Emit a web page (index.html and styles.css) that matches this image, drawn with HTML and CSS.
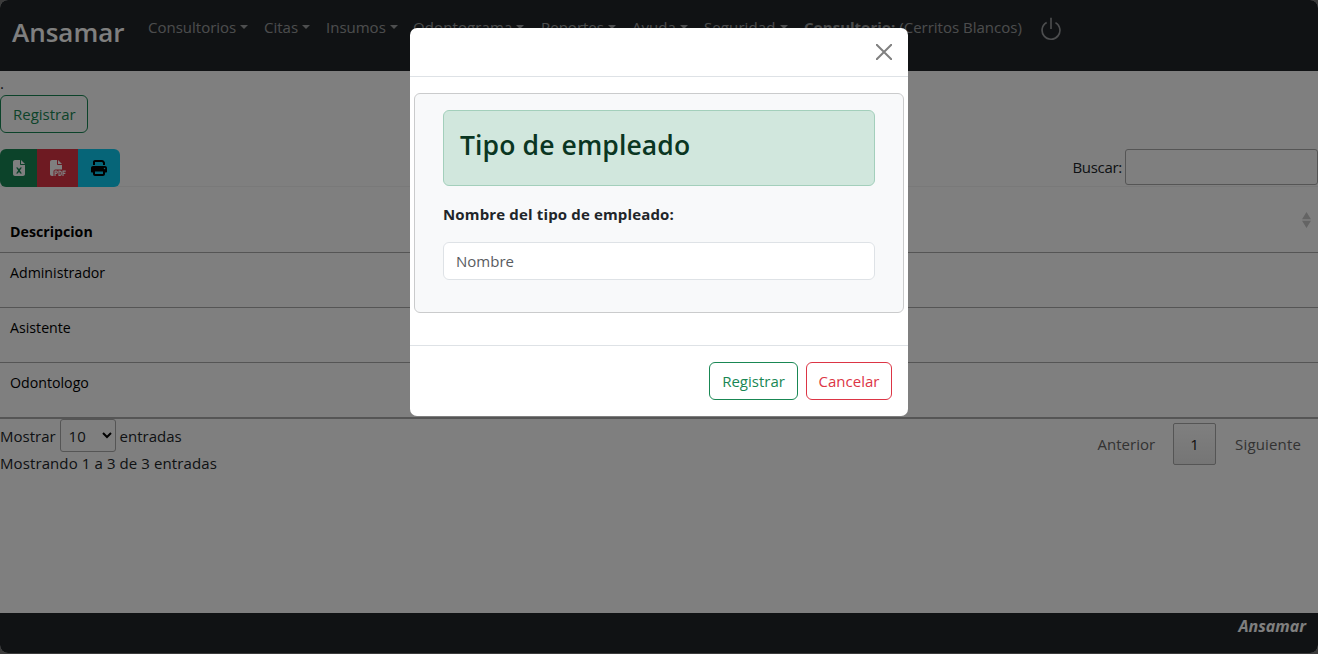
FILE: index.html
```html
<!DOCTYPE html>
<html lang="es">
<head>
<meta charset="utf-8">
<title>Ansamar</title>
<link rel="stylesheet" href="styles.css">
</head>
<body>
<div class="app">
  <nav class="navbar">
    <a class="brand">Ansamar</a>
    <ul class="menu">
      <li class="caret w-consultorios">Consultorios</li>
      <li class="caret w-citas">Citas</li>
      <li class="caret w-insumos">Insumos</li>
      <li class="caret w-odontograma">Odontograma</li>
      <li class="caret w-reportes">Reportes</li>
      <li class="caret w-ayuda">Ayuda</li>
      <li class="caret w-seguridad">Seguridad</li>
      <li class="w-clinic"><b>Consultorio:</b> (Cerritos Blancos)</li>
      <li class="power"><svg width="26" height="26" viewBox="0 0 16 16" fill="currentColor"><path d="M7.5 1v7h1V1z"/><path d="M3 8.812a5 5 0 0 1 2.578-4.375l-.485-.874A6 6 0 1 0 11 3.616l-.501.865A5 5 0 1 1 3 8.812"/></svg></li>
    </ul>
  </nav>
  <main class="content">
    <div class="dot">.</div>
    <button class="btn btn-success">Registrar</button>
    <div class="toolbar">
      <div class="exports">
        <button class="export excel"><svg width="12" height="16" viewBox="0 0 384 512" fill="currentColor"><path d="M64 0C29 0 0 29 0 64v384c0 35 29 64 64 64h256c35 0 64-29 64-64V160H256c-18 0-32-14-32-32V0zm192 0v128h128zM156 240l36 53 36-53h58l-65 96 65 96h-58l-36-53-36 53H98l65-96-65-96z"/></svg></button>
        <button class="export pdf"><svg width="16" height="16" viewBox="0 0 512 512" fill="currentColor"><path d="M0 64C0 29 29 0 64 0h160v128c0 18 14 32 32 32h128v144H176c-35 0-64 29-64 64v144H64c-35 0-64-29-64-64zm384 64H256V0z"/><path fill-rule="evenodd" d="M144 336h52c34 0 57 22 57 54s-23 54-57 54h-16v68h-36zm36 34v40h16c13 0 21-8 21-20s-8-20-21-20zM270 336h48c35 0 60 27 60 62v52c0 35-25 62-60 62h-48zm36 36v104h12c14 0 24-11 24-26v-52c0-15-10-26-24-26zM398 336h106v36h-70v36h58v36h-58v68h-36z"/></svg></button>
        <button class="export print"><svg width="16" height="16" viewBox="0 0 512 512" fill="currentColor"><path fill-rule="evenodd" d="M128 0C93 0 64 29 64 64v96h64V64h227l29 29v67h64V93c0-17-7-33-19-45l-29-29C388 7 372 0 355 0zM64 192c-35 0-64 29-64 64v112c0 18 14 32 32 32h32v48c0 35 29 64 64 64h256c35 0 64-29 64-64v-48h32c18 0 32-14 32-32V256c0-35-29-64-64-64zm64 176h256v80H128zm304-72a24 24 0 1 1 0-48 24 24 0 0 1 0 48z"/></svg></button>
      </div>
      <label class="search"><span>Buscar:</span><input type="text"></label>
    </div>
    <table class="table">
      <thead><tr><th><div class="heading"><span>Descripcion</span><svg class="sort" width="9" height="16" viewBox="0 0 9 16"><path d="M0 7.300L4.500 0 9 7.300zM0 8.700h9L4.500 16z" fill="#c8c8c8"/></svg></div></th></tr></thead>
      <tbody>
        <tr><td>Administrador</td></tr>
        <tr><td>Asistente</td></tr>
        <tr><td>Odontologo</td></tr>
      </tbody>
    </table>
    <div class="table-footer">
      <div class="summary">
        <div class="length"><span>Mostrar</span><span class="select">10<svg width="10" height="7" viewBox="0 0 10 7"><path d="M1 1l4 4 4-4" fill="none" stroke="#000" stroke-width="2"/></svg></span><span>entradas</span></div>
        <div class="info">Mostrando 1 a 3 de 3 entradas</div>
      </div>
      <div class="pagination"><span class="page prev">Anterior</span><span class="page current">1</span><span class="page next">Siguiente</span></div>
    </div>
  </main>
  <footer class="footer">Ansamar</footer>
</div>
<div class="backdrop">
  <section class="modal">
    <header class="modal-header"><svg width="16" height="16" viewBox="0 0 16 16"><path d="M.7.700l14.600 14.600M15.300.700L.7 15.300" stroke="#808080" stroke-width="2" stroke-linecap="round"/></svg></header>
    <div class="modal-body">
      <div class="card">
        <div class="alert"><h3>Tipo de empleado</h3></div>
        <label class="field-label">Nombre del tipo de empleado:</label>
        <input class="field" type="text" placeholder="Nombre">
      </div>
    </div>
    <footer class="modal-footer"><button class="btn btn-success">Registrar</button><button class="btn btn-danger">Cancelar</button></footer>
  </section>
</div>
</body>
</html>
```
FILE: styles.css
```css
* { box-sizing: border-box; }
body {
  margin: 0;
  height: 654px;
  overflow: hidden;
  background: #777;
  color: #212529;
  font: 15px/24px "Open Sans", "Noto Sans", sans-serif;
}
button, input { font: inherit; }
.app {
  display: flex;
  flex-direction: column;
  height: 653px;
  background: #fff;
  border-radius: 8px;
  overflow: hidden;
}
.navbar {
  display: flex;
  align-items: flex-start;
  height: 71px;
  flex: none;
  padding: 8px 12px;
  background: #212529;
  color: #fff;
}
.brand { width: 128px; font-size: 26px; font-weight: 600; line-height: 48px; }
.menu {
  display: flex;
  margin: 0;
  padding: 0;
  list-style: none;
  color: rgba(255, 255, 255, .55);
}
.menu li { flex: none; padding: 7px 8px 8px; white-space: nowrap; }
.caret::after {
  content: "";
  display: inline-block;
  margin-left: 4px;
  vertical-align: 4px;
  border: 4px solid transparent;
  border-top-color: currentColor;
  border-bottom: 0;
}
.w-consultorios { width: 116px; }
.w-citas { width: 62px; }
.w-insumos { width: 87px; }
.w-odontograma { width: 128px; letter-spacing: .1px; }
.w-reportes { width: 91px; }
.w-ayuda { width: 72px; }
.w-seguridad { width: 100px; letter-spacing: .1px; }
.w-clinic { width: 234px; }
.menu .power { padding: 8px; }
.power svg { display: block; }
.content { flex: 1; display: flex; flex-direction: column; align-items: flex-start; }
.dot { height: 24px; }
.btn {
  height: 38px;
  padding: 0 12px;
  background: transparent;
  border: 1px solid;
  border-radius: 6px;
}
.btn-success { width: 88px; color: #198754; }
.btn-danger { width: 86px; padding: 0 11px; color: #dc3545; }
.toolbar {
  display: flex;
  justify-content: space-between;
  width: 100%;
  height: 38px;
  margin-top: 16px;
  border-bottom: 1px solid #f2f2f2;
}
.exports { display: flex; height: 38px; border-radius: 6px; overflow: hidden; }
.export {
  display: flex;
  align-items: center;
  justify-content: center;
  padding: 0;
  border: 0;
  color: #fff;
}
.excel { width: 37px; background: #198754; }
.pdf { width: 41px; background: #dc3545; }
.print { width: 42px; background: #0dcaf0; color: #000; }
.search { display: flex; align-items: center; gap: 3px; height: 36px; letter-spacing: -.3px; }
.search input {
  width: 193px;
  height: 36px;
  border: 1px solid #aaa;
  border-radius: 3px;
  background: transparent;
}
.table { width: 100%; border-collapse: separate; border-spacing: 0; font-size: 14.200px; }
.table th { height: 66px; padding: 0; border-bottom: 1px solid #aaa; color: #000; font-weight: 700; }
.heading { display: flex; justify-content: space-between; padding: 23px 7px 0 10px; height: 65px; }
.heading span { padding-top: 10px; }
.sort { margin-top: 2px; }
.table td { height: 55px; padding: 8px 10px; vertical-align: top; border-bottom: 1px solid #aaa; color: #000; }
.table tbody tr:last-child td { height: 56px; border-bottom-width: 2px; }
.table-footer { display: flex; justify-content: space-between; width: 100%; }
.length { display: flex; align-items: center; gap: 4px; height: 33px; }
.select {
  display: flex;
  align-items: center;
  justify-content: space-between;
  width: 56px;
  height: 33px;
  padding: 0 3px 0 8px;
  border: 1px solid #aaa;
  border-radius: 3px;
}
.info { line-height: 23px; letter-spacing: .1px; }
.pagination { display: flex; padding-top: 4px; color: #666; line-height: 42px; }
.page { height: 42px; text-align: center; }
.prev { padding-right: 18px; }
.current {
  width: 43px;
  border: 1px solid #aaa;
  border-radius: 2px;
  background: linear-gradient(#fff, #ebebeb);
  color: #222;
  line-height: 40px;
}
.next { padding: 0 17px 0 19px; letter-spacing: .15px; }
.footer {
  height: 40px;
  flex: none;
  padding: 1px 12px 0 0;
  background: #212529;
  color: #fff;
  font-size: 16px;
  font-weight: 700;
  font-style: italic;
  text-align: right;
}
.backdrop {
  position: fixed;
  inset: 0;
  display: flex;
  justify-content: center;
  align-items: flex-start;
  padding-top: 28px;
  background: rgba(0, 0, 0, .5);
}
.modal { width: 498px; height: 388px; background: #fff; border-radius: 7px; overflow: hidden; }
.modal-header {
  display: flex;
  justify-content: flex-end;
  height: 49px;
  padding: 16px;
  border-bottom: 1px solid #dee2e6;
}
.modal-body { height: 268px; padding: 16px 4px 0; }
.card {
  height: 220px;
  padding: 16px 28px;
  background: #f8f9fa;
  border: 1px solid #cacbcc;
  border-radius: 6px;
}
.alert {
  height: 76px;
  padding: 16px;
  background: #d1e7dd;
  border: 1px solid #a3cfbb;
  border-radius: 6px;
  color: #0a3622;
}
.alert h3 { margin: 0; font-size: 26.500px; font-weight: 600; line-height: 37px; letter-spacing: .12px; }
.field-label { display: block; margin-top: 16px; font-weight: 700; letter-spacing: .15px; }
.field {
  display: block;
  width: 100%;
  height: 38px;
  margin-top: 16px;
  padding: 0 12px;
  border: 1px solid #dee2e6;
  border-radius: 6px;
  background: #fff;
}
.field::placeholder { color: #595c5f; opacity: 1; }
.modal-footer {
  display: flex;
  justify-content: flex-end;
  gap: 8px;
  height: 71px;
  padding: 16px;
  border-top: 1px solid #dee2e6;
}
.modal-footer .btn-success { width: 89px; }
```
